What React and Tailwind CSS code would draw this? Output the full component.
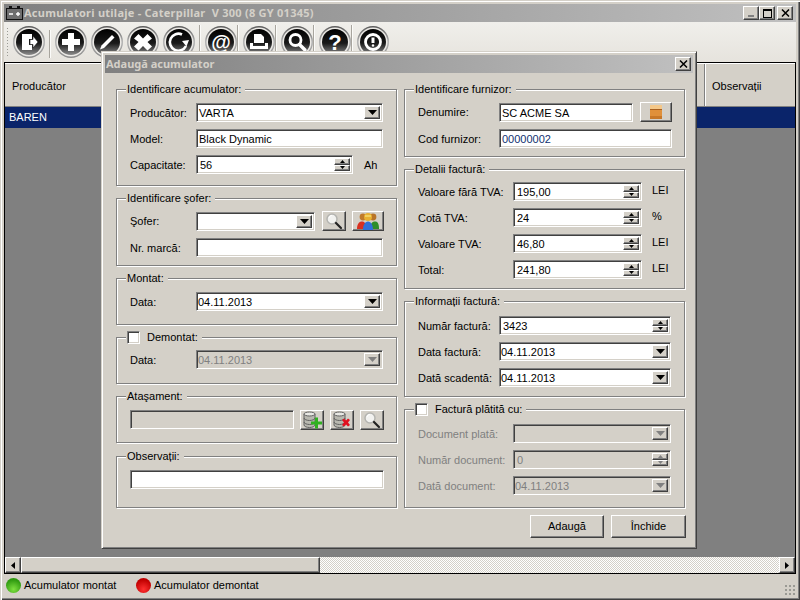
import React from "react";

const raised = "border border-t-white border-l-white border-r-[#404040] border-b-[#404040] shadow-[inset_-1px_-1px_0_#808080] bg-[#d4d0c8]";
const sunkenBase = "border border-t-[#808080] border-l-[#808080] border-r-white border-b-white shadow-[inset_1px_1px_0_#404040,inset_-1px_-1px_0_#d4d0c8]";

function Tri({ dir = "down", color = "#000", w = 7, h = 4 }) {
  const pts = dir === "down" ? `0,0 ${w},0 ${w / 2},${h}` : dir === "up" ? `0,${h} ${w},${h} ${w / 2},0` : dir === "left" ? `${w},0 ${w},${h} 0,${h / 2}` : `0,0 0,${h} ${w},${h / 2}`;
  return <svg width={w} height={h} viewBox={`0 0 ${w} ${h}`}><polygon points={pts} fill={color} /></svg>;
}

function DropBtn({ disabled }) {
  return (
    <div className={`${raised} w-[16px] flex items-center justify-center`}>
      <Tri color={disabled ? "#808080" : "#000"} w={9} h={5} />
    </div>
  );
}

function Field({ w, children, disabled, extra, textClass = "" }) {
  return (
    <div className={`${sunkenBase} ${w} h-[19px] flex items-stretch p-[2px] shrink-0 ${disabled ? "bg-[#d4d0c8] text-[#808080]" : "bg-white text-black"}`}>
      <div className={`flex-1 min-w-0 leading-[15px] whitespace-nowrap ${textClass}`}>{children}</div>
      {extra}
    </div>
  );
}

function Combo({ w, children, disabled, date }) {
  return <Field w={w} disabled={disabled} textClass={date ? "-ml-[1px]" : ""} extra={<DropBtn disabled={disabled} />}>{children}</Field>;
}

function Spin({ w, children, disabled }) {
  const color = disabled ? "#808080" : "#000";
  return (
    <Field
      w={w}
      disabled={disabled}
      textClass="pl-[1px]"
      extra={
        <div className="w-[16px] flex flex-col">
          <div className={`${raised} flex-1 flex items-center justify-center`}><Tri dir="up" color={color} w={5} h={3} /></div>
          <div className={`${raised} flex-1 flex items-center justify-center`}><Tri color={color} w={5} h={3} /></div>
        </div>
      }
    >
      {children}
    </Field>
  );
}

function Box({ title, className = "", children, check }) {
  return (
    <div className={`relative border border-[#808080] shadow-[1px_1px_0_#fff,inset_1px_1px_0_#fff] ${className}`}>
      <div className="absolute -top-[8px] left-[9px] bg-[#d4d0c8] px-[1px] flex items-center h-[15px] leading-[15px] whitespace-nowrap">
        {check && <div className={`${sunkenBase} bg-white w-[13px] h-[13px] mr-[7px]`} />}
        {title}
        <span className="w-[3px]" />
      </div>
      {children}
    </div>
  );
}

function Row({ label, lw, children, disabled }) {
  return (
    <div className="flex items-center pl-[13px]">
      <div className={`${lw} shrink-0 whitespace-nowrap pt-[1px] ${disabled ? "text-[#808080]" : "text-black"}`}>{label}</div>
      {children}
    </div>
  );
}

function Magnifier() {
  return (
    <svg width="18" height="18" viewBox="0 0 18 18">
      <circle cx="7" cy="7" r="5" fill="#f2f2f0" stroke="#b4b4b0" strokeWidth="1.500" />
      <path d="M4 6a3 3 0 0 1 3-2.500" stroke="#fff" fill="none" />
      <path d="M11 11 16 16" stroke="#222" strokeWidth="2.200" strokeLinecap="round" />
    </svg>
  );
}
function People() {
  return (
    <svg width="24" height="19" viewBox="0 0 24 19">
      <circle cx="7" cy="5" r="3.400" fill="#c07a2a" />
      <circle cx="17" cy="5" r="3.400" fill="#b87428" />
      <circle cx="12" cy="5" r="4" fill="#e8b030" />
      <path d="M9 3h6v2H9z" fill="#f0d060" />
      <path d="M1 17c0-5 2-7.500 5-7.500S10 12 10 17z" fill="#d83020" />
      <path d="M14 17c0-5 2-7.500 5-7.500S23 12 23 17z" fill="#2e8e28" />
      <path d="M7 18c0-5 2-8.500 5-8.500s5 3.500 5 8.500z" fill="#3070d8" />
    </svg>
  );
}
function Drawer() {
  return (
    <svg width="14" height="16" viewBox="0 0 14 16">
      <rect x="1" y="1" width="12" height="14" rx="1" fill="#e0903a" />
      <rect x="1" y="1" width="12" height="4" fill="#f4c88a" />
      <rect x="1" y="5" width="12" height="1" fill="#a86020" />
      <rect x="1" y="12" width="12" height="3" fill="#c87828" />
    </svg>
  );
}
function Db({ kind }) {
  return (
    <svg width="20" height="18" viewBox="0 0 20 18">
      <path d="M2 3v11c0 1.500 3 2.500 5.500 2.500S13 15.500 13 14V3z" fill="#b8b8b0" stroke="#606060" />
      <ellipse cx="7.500" cy="3" rx="5.500" ry="2" fill="#e8e8e4" stroke="#606060" />
      <path d="M2 7c0 1.500 3 2.500 5.500 2.500S13 8.500 13 7M2 11c0 1.500 3 2.500 5.500 2.500S13 12.500 13 11" fill="none" stroke="#606060" />
      {kind === "add" ? (
        <path d="M13 6.500v4h-4v3h4v4h3v-4h4v-3h-4v-4z" fill="#30b020" />
      ) : (
        <path d="M10 9l2-1.500 2 2 2-2 2 1.500-2 2.500 2 2.500-2 1.500-2-2-2 2-2-1.500 2-2.500z" fill="#e01020" />
      )}
    </svg>
  );
}

function IconBtn({ wide, children }) {
  return <div className={`${raised} ${wide ? "w-[32px]" : "w-[24px]"} h-[20px] flex items-center justify-center shrink-0`}>{children}</div>;
}

function Round({ children }) {
  return (
    <svg width="32" height="34" viewBox="0 0 32 34" className="shrink-0">
      <defs>
        <linearGradient id="ringG" x1="0" y1="0" x2="0" y2="1">
          <stop offset="0" stopColor="#5a5a5a" />
          <stop offset="0.5" stopColor="#b4b4b4" />
          <stop offset="1" stopColor="#8a8a8a" />
        </linearGradient>
        <linearGradient id="faceG" x1="0" y1="0" x2="0" y2="1">
          <stop offset="0" stopColor="#000" />
          <stop offset="0.55" stopColor="#1a1a1a" />
          <stop offset="1" stopColor="#8c8c8c" />
        </linearGradient>
      </defs>
      <circle cx="16" cy="17" r="16" fill="url(#ringG)" />
      <circle cx="16" cy="17" r="14.500" fill="#eceae6" />
      <circle cx="16" cy="17" r="13" fill="url(#faceG)" />
      <g>{children}</g>
    </svg>
  );
}

const glyphs = [
  <g key="a"><path d="M9 9h10v5h-3v6h3v5H9z" fill="#fff" /><path d="M17 14.500h3v-3.500l5 6-5 6v-3.500h-3z" fill="#fff" stroke="#111" strokeWidth="0.600" /></g>,
  <path key="b" d="M13 8h6v6h6v6h-6v6h-6v-6H7v-6h6z" fill="#fff" />,
  <path key="c" d="M9 24.500l1.500-4L21 10l2.500 2.500L13 23z" fill="#fff" />,
  <path key="d" d="M11.500 9 16 13.500 20.500 9 25 13.500 20.500 17 25 21.500 20.500 25.500 16 21 11.500 25.500 7 21.500 11.500 17 7 13.500z" fill="#fff" />,
  <g key="e"><path d="M23 21A8.500 8.500 0 1 1 19 9.500" fill="none" stroke="#fff" strokeWidth="2.600" /><path d="M26 15l-7 1 4.500 5.500z" fill="#fff" /></g>,
  <text key="f" x="16" y="23.500" textAnchor="middle" fontSize="20" fontWeight="700" fontFamily="Liberation Sans" fill="#fff">@</text>,
  <g key="g"><path d="M11 9h7l3 3v6H11z" fill="#fff" /><path d="M7 18h3v3h12v-3h3v6H7z" fill="#fff" /></g>,
  <g key="h"><circle cx="14.500" cy="15" r="5.500" fill="none" stroke="#fff" strokeWidth="2.800" /><path d="M18.500 19.500 24 25" stroke="#fff" strokeWidth="3.400" strokeLinecap="round" /></g>,
  <text key="i" x="16" y="25" textAnchor="middle" fontSize="22" fontWeight="700" fontFamily="Liberation Sans" fill="#fff">?</text>,
  <g key="j"><circle cx="16" cy="17" r="7.500" fill="none" stroke="#fff" strokeWidth="2.800" /><path d="M16 12.500v5.500" stroke="#fff" strokeWidth="3" /><circle cx="16" cy="20.500" r="1.200" fill="#fff" /></g>,
];

function Sep() {
  return <div className="w-[2px] h-[28px] mx-[4px] border-l border-[#a8a59e] bg-[#fbfbf9] shrink-0 self-center" />;
}

function Battery() {
  return (
    <svg width="17" height="14" viewBox="0 0 17 14" className="shrink-0">
      <path d="M3 0h3v2H3zM11 0h3v2h-3z" fill="#111" />
      <rect x="0.500" y="2.500" width="16" height="11" fill="#6e6e6e" stroke="#111" />
      <path d="M3 8h4M10 8h4M12 6v4" stroke="#fff" strokeWidth="1.400" />
    </svg>
  );
}

const closeX = <svg width="9" height="8" viewBox="0 0 9 8"><path d="M1 0.500 8 7.500M8 0.500 1 7.500" stroke="#000" strokeWidth="1.500" /></svg>;

export default function App() {
  const titleFont = "font-bold text-[11px] font-[Noto_Sans,sans-serif]";
  return (
    <div className="relative w-[800px] h-[600px] overflow-hidden bg-[#d4d0c8] p-[4px] flex flex-col text-[11px] text-black font-[Liberation_Sans,Arial,sans-serif] shadow-[inset_1px_1px_0_#d4d0c8,inset_2px_2px_0_#fff,inset_-1px_-1px_0_#404040,inset_-2px_-2px_0_#808080]">
      {/* window title */}
      <div className="h-[18px] shrink-0 flex items-center pl-[2px] pr-[3px] bg-linear-to-r from-[#808080] to-[#c0c0c0]">
        <Battery />
        <span className={`ml-[1px] text-[#d4d0c8] whitespace-nowrap tracking-[0.25px] ${titleFont}`}>Acumulatori utilaje - Caterpillar&nbsp; V 300 (8 GY 01345)</span>
        <div className="ml-auto flex items-center">
          <div className={`${raised} w-[16px] h-[14px] flex items-end justify-center pb-[2px]`}><div className="w-[6px] h-[2px] bg-[#808080]" /></div>
          <div className={`${raised} w-[16px] h-[14px] flex items-center justify-center`}><div className="w-[9px] h-[9px] border border-black border-t-2" /></div>
          <div className={`${raised} w-[16px] h-[14px] ml-[2px] flex items-center justify-center`}>{closeX}</div>
        </div>
      </div>

      {/* toolbar */}
      <div className="h-[40px] shrink-0 flex items-start pt-[3px] pl-[2px] bg-linear-to-b from-[#f0efeb] to-[#e6e3dd]">
        <div className="w-[3px] h-[30px] mt-[2px] mr-[4px] bg-[radial-gradient(#9a9a94_1px,transparent_1px)] bg-[length:3px_3px] shrink-0" />
        <Round>{glyphs[0]}</Round>
        <Sep />
        {[1, 2, 3, 4].map((i) => (
          <div key={i} className="mr-[4px] last:mr-0 flex"><Round>{glyphs[i]}</Round></div>
        ))}
        {[5, 6, 7, 8, 9].map((i) => (
          <React.Fragment key={i}>
            <div className="-ml-[4px] flex"><Sep /></div>
            <Round>{glyphs[i]}</Round>
          </React.Fragment>
        ))}
      </div>

      {/* grid */}
      <div className="h-[512px] shrink-0 border border-black flex flex-col bg-[#808080]">
        <div className="h-[44px] shrink-0 flex bg-[#d4d0c8] border-t border-white border-b border-b-[#808080]">
          <div className="flex-1 pl-[7px] pt-[2px] flex items-center">Producător</div>
          <div className="w-[90px] pl-[6px] pt-[2px] flex items-center border-l border-white shadow-[-1px_0_0_#808080]">Observații</div>
        </div>
        <div className="h-[21px] shrink-0 bg-[#0a246a] text-white pl-[4px] flex items-center">BAREN</div>
        <div className="flex-1" />
        <div className="h-[16px] shrink-0 flex bg-[repeating-conic-gradient(#fff_0_25%,#d4d0c8_0_50%)] bg-[length:2px_2px]">
          <div className={`${raised} w-[16px] flex items-center justify-center`}><Tri dir="left" w={4} h={7} /></div>
          <div className={`${raised} w-[299px]`} />
          <div className={`${raised} w-[16px] ml-auto flex items-center justify-center`}><Tri dir="right" w={4} h={7} /></div>
        </div>
      </div>

      {/* status */}
      <div className="flex-1 relative flex items-center pl-[2px]">
        <div className="w-[15px] h-[15px] rounded-full bg-[radial-gradient(circle_at_50%_75%,#7fe040,#2f9a10_70%)] shrink-0" />
        <span className="ml-[3px] pt-[1px] w-[112px] whitespace-nowrap">Acumulator montat</span>
        <div className="w-[15px] h-[15px] rounded-full bg-[radial-gradient(circle_at_50%_75%,#ff3030,#c00000_70%)] shrink-0" />
        <span className="ml-[3px] pt-[1px] whitespace-nowrap">Acumulator demontat</span>
        <div className="absolute right-[1px] bottom-[1px] w-[11px] h-[11px] bg-[radial-gradient(#9a9a94_1px,transparent_1px)] bg-[length:4px_4px]" />
      </div>

      {/* dialog */}
      <div className="absolute left-[101px] top-[51px] w-[596px] h-[498px] bg-[#d4d0c8] flex flex-col p-[3px] border border-t-[#d4d0c8] border-l-[#d4d0c8] border-r-[#404040] border-b-[#404040] shadow-[inset_1px_1px_0_#fff,inset_-1px_-1px_0_#808080]">
        <div className="h-[18px] shrink-0 flex items-center pl-[1px] pr-[2px] bg-linear-to-r from-[#808080] to-[#c0c0c0]">
          <span className={`text-[#d4d0c8] whitespace-nowrap ${titleFont}`}>Adaugă acumulator</span>
          <div className={`${raised} ml-auto w-[16px] h-[14px] flex items-center justify-center`}>{closeX}</div>
        </div>

        <div className="flex pl-[11px] pt-[16px] gap-[7px]">
          {/* left */}
          <div className="w-[281px] flex flex-col">
            <Box title="Identificare acumulator:" className="h-[97px] pt-[13px] flex flex-col gap-[7px]">
              <Row label="Producător:" lw="w-[66px]"><Combo w="w-[187px]">VARTA</Combo></Row>
              <Row label="Model:" lw="w-[66px]"><Field w="w-[187px]">Black Dynamic</Field></Row>
              <Row label="Capacitate:" lw="w-[66px]">
                <Spin w="w-[157px]">56</Spin>
                <span className="ml-[11px] pt-[1px]">Ah</span>
              </Row>
            </Box>
            <Box title="Identificare şofer:" className="h-[68px] pt-[12px] mt-[12px] flex flex-col gap-[7px]">
              <Row label="Şofer:" lw="w-[66px]">
                <div className="h-[20px] flex items-center">
                  <Combo w="w-[119px]" />
                </div>
                <div className="ml-[7px]"><IconBtn><Magnifier /></IconBtn></div>
                <div className="ml-[6px]"><IconBtn wide><People /></IconBtn></div>
              </Row>
              <Row label="Nr. marcă:" lw="w-[66px]"><Field w="w-[187px]" /></Row>
            </Box>
            <Box title="Montat:" className="h-[47px] pt-[13px] mt-[12px]">
              <Row label="Data:" lw="w-[66px]"><Combo w="w-[187px]" date>04.11.2013</Combo></Row>
            </Box>
            <Box title="Demontat:" check className="h-[47px] pt-[12px] mt-[12px]">
              <Row label="Data:" lw="w-[66px]"><Combo w="w-[187px]" disabled date>04.11.2013</Combo></Row>
            </Box>
            <Box title="Ataşament:" className="h-[47px] pt-[13px] mt-[12px]">
              <div className="flex pl-[13px] gap-[6px]">
                <div className="h-[20px] flex"><Field w="w-[164px]" disabled /></div>
                <IconBtn><Db kind="add" /></IconBtn>
                <IconBtn><Db kind="del" /></IconBtn>
                <IconBtn><Magnifier /></IconBtn>
              </div>
            </Box>
            <Box title="Observații:" className="h-[52px] pt-[13px] mt-[13px]">
              <div className="pl-[13px]"><Field w="w-[254px]" /></div>
            </Box>
          </div>

          {/* right */}
          <div className="w-[281px] flex flex-col">
            <Box title="Identificare furnizor:" className="h-[68px] pt-[12px] flex flex-col gap-[7px]">
              <Row label="Denumire:" lw="w-[81px]">
                <Field w="w-[134px]">SC ACME SA</Field>
                <div className="ml-[7px]"><IconBtn wide><Drawer /></IconBtn></div>
              </Row>
              <Row label="Cod furnizor:" lw="w-[81px]"><Field w="w-[173px]" textClass="text-[#103070]">00000002</Field></Row>
            </Box>
            <Box title="Detalii factură:" className="h-[120px] pt-[12px] mt-[12px] flex flex-col gap-[7px]">
              {[["Valoare fără TVA:", "195,00", "LEI"], ["Cotă TVA:", "24", "%"], ["Valoare TVA:", "46,80", "LEI"], ["Total:", "241,80", "LEI"]].map(([l, v, u]) => (
                <Row key={l} label={l} lw="w-[95px]">
                  <Spin w="w-[129px]">{v}</Spin>
                  <span className="ml-[10px] -mt-[2px]">{u}</span>
                </Row>
              ))}
            </Box>
            <Box title="Informații factură:" className="h-[96px] pt-[14px] mt-[12px] flex flex-col gap-[7px]">
              <Row label="Număr factură:" lw="w-[81px]"><Spin w="w-[172px]">3423</Spin></Row>
              <Row label="Data factură:" lw="w-[81px]"><Combo w="w-[172px]" date>04.11.2013</Combo></Row>
              <Row label="Dată scadentă:" lw="w-[81px]"><Combo w="w-[172px]" date>04.11.2013</Combo></Row>
            </Box>
            <Box title="Factură plătită cu:" check className="h-[99px] pt-[14px] mt-[12px] flex flex-col gap-[7px]">
              <Row label="Document plată:" lw="w-[95px]" disabled><Combo w="w-[158px]" disabled /></Row>
              <Row label="Număr document:" lw="w-[95px]" disabled><Spin w="w-[158px]" disabled>0</Spin></Row>
              <Row label="Dată document:" lw="w-[95px]" disabled><Combo w="w-[158px]" disabled date>04.11.2013</Combo></Row>
            </Box>
          </div>
        </div>

        <div className="flex justify-end gap-[7px] pt-[7px] pr-[7px]">
          <div className={`${raised} w-[74px] h-[23px] flex items-center justify-center`}>Adaugă</div>
          <div className={`${raised} w-[75px] h-[23px] flex items-center justify-center`}>Închide</div>
        </div>
      </div>
    </div>
  );
}
